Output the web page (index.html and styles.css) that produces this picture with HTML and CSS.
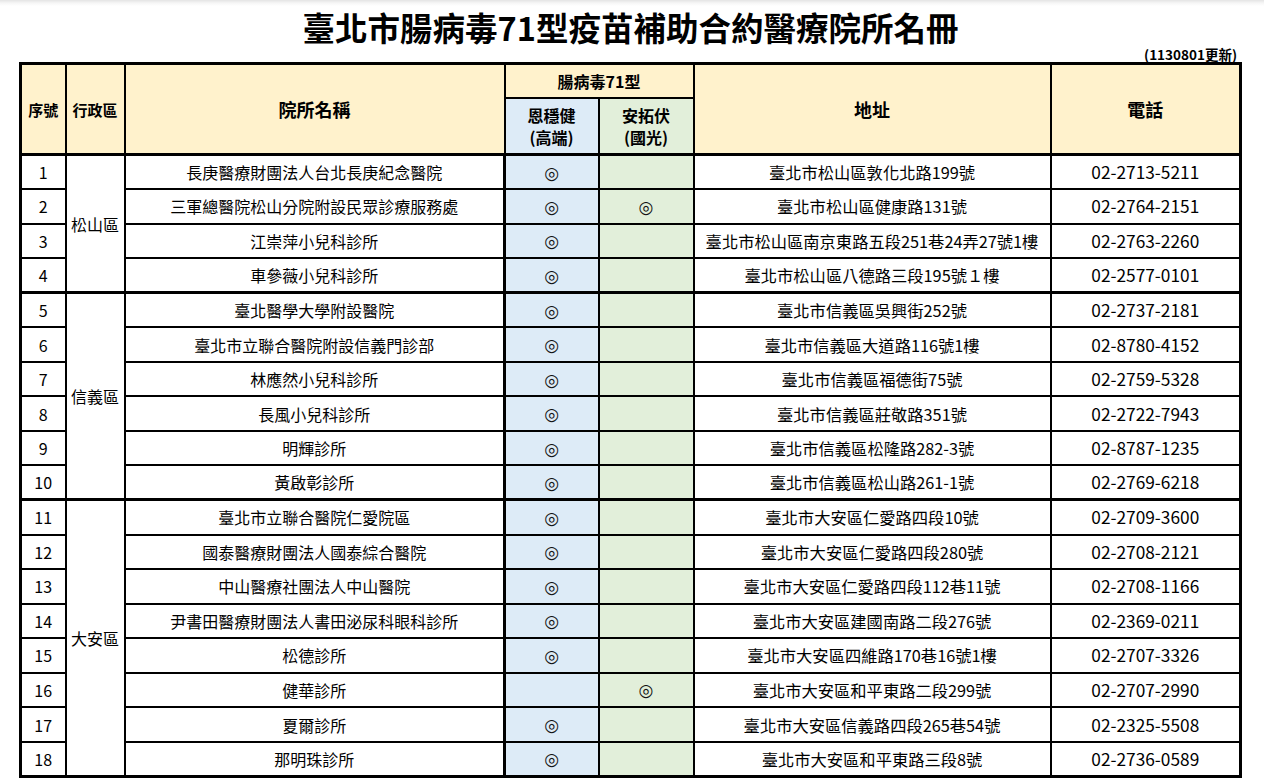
FILE: index.html
```
<!DOCTYPE html>
<html lang="zh-Hant">
<head>
<meta charset="utf-8">
<title>臺北市腸病毒71型疫苗補助合約醫療院所名冊</title>
<link rel="stylesheet" href="styles.css">
</head>
<body>
<div class="sheet">
  <h1 class="title">臺北市腸病毒71型疫苗補助合約醫療院所名冊</h1>
  <div class="updated">(1130801更新)</div>
  <table class="roster">
    <colgroup>
      <col class="c-no"><col class="c-dist"><col class="c-name"><col class="c-hi"><col class="c-gk"><col class="c-addr"><col class="c-tel">
    </colgroup>
    <thead>
      <tr class="hrow1">
        <th rowspan="2" class="hs">序號</th>
        <th rowspan="2" class="hs">行政區</th>
        <th rowspan="2" class="hl name-col">院所名稱</th>
        <th colspan="2" class="grp">腸病毒71型</th>
        <th rowspan="2" class="hl">地址</th>
        <th rowspan="2" class="hl">電話</th>
      </tr>
      <tr class="hrow2">
        <th class="vh hi">恩穩健<br>(高端)</th>
        <th class="vh gk">安拓伏<br>(國光)</th>
      </tr>
    </thead>
    <tbody class="district">
      <tr><td>1</td><td rowspan="4" class="dist">松山區</td><td>長庚醫療財團法人台北長庚紀念醫院</td><td class="hi"><span class="mark">◎</span></td><td class="gk"></td><td class="addr">臺北市松山區敦化北路199號</td><td class="tel">02-2713-5211</td></tr>
      <tr><td>2</td><td>三軍總醫院松山分院附設民眾診療服務處</td><td class="hi"><span class="mark">◎</span></td><td class="gk"><span class="mark">◎</span></td><td class="addr">臺北市松山區健康路131號</td><td class="tel">02-2764-2151</td></tr>
      <tr><td>3</td><td>江崇萍小兒科診所</td><td class="hi"><span class="mark">◎</span></td><td class="gk"></td><td class="addr">臺北市松山區南京東路五段251巷24弄27號1樓</td><td class="tel">02-2763-2260</td></tr>
      <tr><td>4</td><td>車參薇小兒科診所</td><td class="hi"><span class="mark">◎</span></td><td class="gk"></td><td class="addr">臺北市松山區八德路三段195號１樓</td><td class="tel">02-2577-0101</td></tr>
    </tbody>
    <tbody class="district">
      <tr><td>5</td><td rowspan="6" class="dist">信義區</td><td>臺北醫學大學附設醫院</td><td class="hi"><span class="mark">◎</span></td><td class="gk"></td><td class="addr">臺北市信義區吳興街252號</td><td class="tel">02-2737-2181</td></tr>
      <tr><td>6</td><td>臺北市立聯合醫院附設信義門診部</td><td class="hi"><span class="mark">◎</span></td><td class="gk"></td><td class="addr">臺北市信義區大道路116號1樓</td><td class="tel">02-8780-4152</td></tr>
      <tr><td>7</td><td>林應然小兒科診所</td><td class="hi"><span class="mark">◎</span></td><td class="gk"></td><td class="addr">臺北市信義區福德街75號</td><td class="tel">02-2759-5328</td></tr>
      <tr><td>8</td><td>長風小兒科診所</td><td class="hi"><span class="mark">◎</span></td><td class="gk"></td><td class="addr">臺北市信義區莊敬路351號</td><td class="tel">02-2722-7943</td></tr>
      <tr><td>9</td><td>明輝診所</td><td class="hi"><span class="mark">◎</span></td><td class="gk"></td><td class="addr">臺北市信義區松隆路282-3號</td><td class="tel">02-8787-1235</td></tr>
      <tr><td>10</td><td>黃啟彰診所</td><td class="hi"><span class="mark">◎</span></td><td class="gk"></td><td class="addr">臺北市信義區松山路261-1號</td><td class="tel">02-2769-6218</td></tr>
    </tbody>
    <tbody class="district">
      <tr><td>11</td><td rowspan="8" class="dist">大安區</td><td>臺北市立聯合醫院仁愛院區</td><td class="hi"><span class="mark">◎</span></td><td class="gk"></td><td class="addr">臺北市大安區仁愛路四段10號</td><td class="tel">02-2709-3600</td></tr>
      <tr><td>12</td><td>國泰醫療財團法人國泰綜合醫院</td><td class="hi"><span class="mark">◎</span></td><td class="gk"></td><td class="addr">臺北市大安區仁愛路四段280號</td><td class="tel">02-2708-2121</td></tr>
      <tr><td>13</td><td>中山醫療社團法人中山醫院</td><td class="hi"><span class="mark">◎</span></td><td class="gk"></td><td class="addr">臺北市大安區仁愛路四段112巷11號</td><td class="tel">02-2708-1166</td></tr>
      <tr><td>14</td><td>尹書田醫療財團法人書田泌尿科眼科診所</td><td class="hi"><span class="mark">◎</span></td><td class="gk"></td><td class="addr">臺北市大安區建國南路二段276號</td><td class="tel">02-2369-0211</td></tr>
      <tr><td>15</td><td>松德診所</td><td class="hi"><span class="mark">◎</span></td><td class="gk"></td><td class="addr">臺北市大安區四維路170巷16號1樓</td><td class="tel">02-2707-3326</td></tr>
      <tr><td>16</td><td>健華診所</td><td class="hi"></td><td class="gk"><span class="mark">◎</span></td><td class="addr">臺北市大安區和平東路二段299號</td><td class="tel">02-2707-2990</td></tr>
      <tr><td>17</td><td>夏爾診所</td><td class="hi"><span class="mark">◎</span></td><td class="gk"></td><td class="addr">臺北市大安區信義路四段265巷54號</td><td class="tel">02-2325-5508</td></tr>
      <tr><td>18</td><td>那明珠診所</td><td class="hi"><span class="mark">◎</span></td><td class="gk"></td><td class="addr">臺北市大安區和平東路三段8號</td><td class="tel">02-2736-0589</td></tr>
    </tbody>
  </table>
</div>
</body>
</html>
```

FILE: styles.css
```
html, body {
  margin: 0;
  padding: 0;
}

body {
  background: linear-gradient(#e4e4e4 0, #f6f6f6 3px, #ffffff 6px) no-repeat;
  background-color: #ffffff;
  color: #000;
  font-family: "Noto Sans CJK TC", "Noto Sans", sans-serif;
  height: 778px;
  overflow: hidden;
}

.sheet {
  padding-left: 19px;
  width: 1223px;
}

.title {
  margin: 0;
  padding-top: 6px;
  height: 41px;
  line-height: 41px;
  font-size: 32.5px;
  font-weight: 700;
  text-align: center;
}

.updated {
  height: 15px;
  line-height: 15px;
  font-size: 13.5px;
  font-weight: 700;
  text-align: right;
  padding-right: 5px;
}

.roster {
  border-collapse: collapse;
  table-layout: fixed;
  width: 1223px;
  border: 3px solid #000;
}

.c-no { width: 45px; }
.c-dist { width: 59px; }
.c-name { width: 380px; }
.c-hi { width: 94px; }
.c-gk { width: 95px; }
.c-addr { width: 357px; }
.c-tel { width: 190px; }

.roster th,
.roster td {
  border: 2px solid #000;
  padding: 0;
  text-align: center;
  vertical-align: middle;
  white-space: nowrap;
  overflow: hidden;
}

.roster thead th {
  background: #fff2cc;
  font-weight: 700;
}

.roster thead {
  border-bottom: 3px solid #000;
}

.hrow1 { height: 34px; }
.hrow2 { height: 57px; }

.hs {
  font-size: 15px;
}

.hl {
  font-size: 18px;
}

.grp {
  font-size: 16px;
}

.roster thead th.vh {
  font-size: 16px;
  line-height: 22px;
}

.roster .hi {
  background: #ddebf7;
}

.roster .gk {
  background: #e2efda;
}

.name-col {
  border-right: 3px solid #000;
}

.roster td:nth-last-child(5) {
  border-right-width: 3px;
}

.roster tbody.district {
  border-top: 3px solid #000;
}

.roster tbody tr {
  height: 34.55px;
}

.roster td {
  font-size: 16px;
  line-height: 22px;
}

.roster td.addr {
  font-size: 16.3px;
}

.roster td.tel {
  font-size: 17.3px;
}

.mark {
  font-family: "DejaVu Sans", sans-serif;
  font-size: 17px;
  line-height: 22px;
  font-weight: 700;
  color: #111;
}
```
